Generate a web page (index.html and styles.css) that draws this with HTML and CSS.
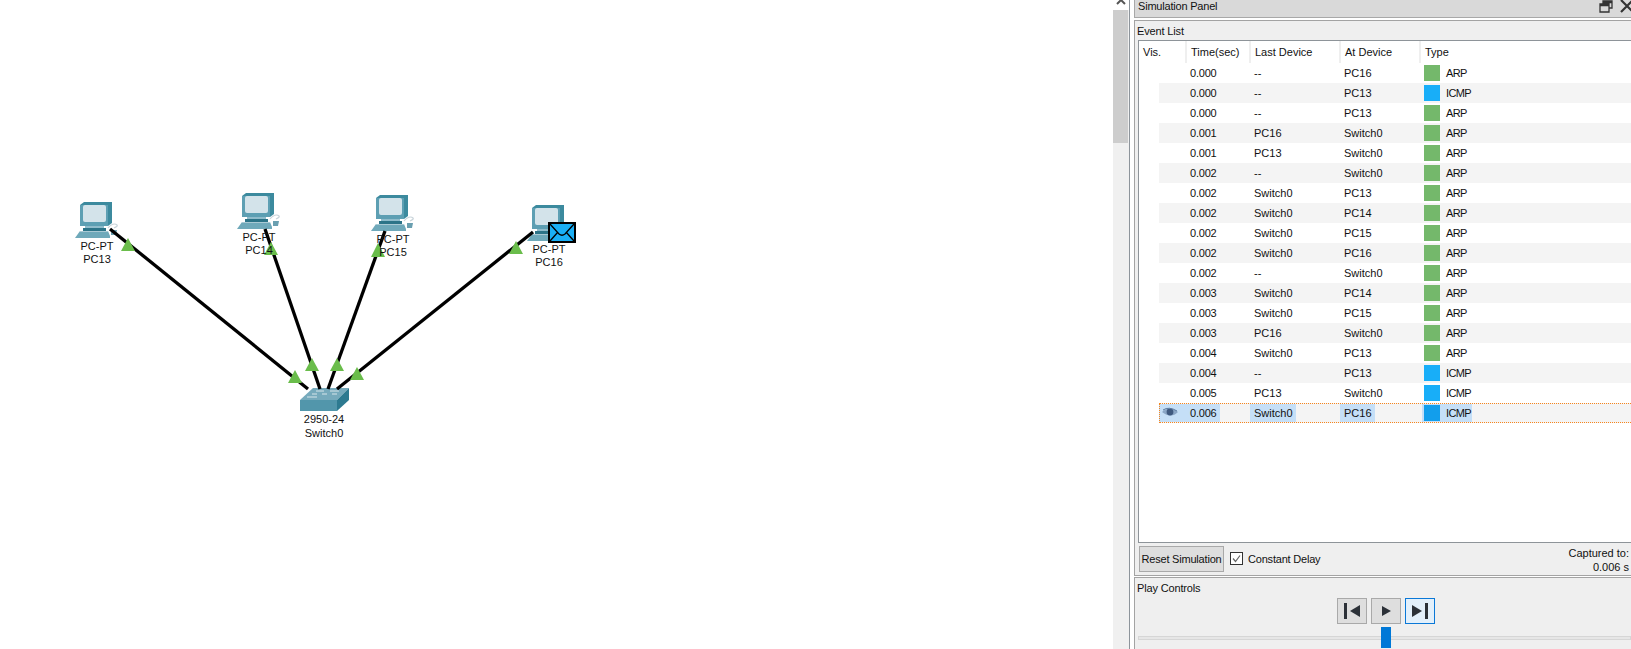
FILE: index.html
```html
<!DOCTYPE html>
<html lang="en">
<head>
<meta charset="utf-8">
<title>Simulation Panel</title>
<link rel="stylesheet" href="styles.css">
</head>
<body>
<svg class="defs" width="0" height="0" aria-hidden="true">
  <defs>
    <symbol id="pc" viewBox="0 0 44 36">
      <polygon points="5,3 9,0 37,0 37,21 33,24 5,24" fill="#3c8a9e"/>
      <rect x="5" y="3" width="28" height="21" fill="#5d9fb3"/>
      <rect x="8" y="3" width="23" height="17" rx="2" fill="#d3e3ea"/>
      <rect x="10" y="24" width="19" height="2" fill="#8fbccb"/>
      <rect x="8" y="26" width="23" height="3" fill="#2c7488"/>
      <polygon points="5,29 33,29 35,34 35,36 0,36" fill="#6fa9ba"/>
      <rect x="5" y="29" width="28" height="1" fill="#a9c9d4"/>
      <path d="M33 26c3-4 7-5 9-3 1 1-1 2-3 3" fill="none" stroke="#c9d4da" stroke-width="1.2"/>
      <polygon points="36,28 42,28 41,33 36,33" fill="#6a9fb0"/>
    </symbol>
  </defs>
</svg>
<main class="app">
  <section class="canvas">
    <div class="node node-13"><svg class="pc-icon"><use href="#pc"/></svg><p class="label">PC-PT</p><p class="label">PC13</p></div>
    <div class="node node-14"><svg class="pc-icon"><use href="#pc"/></svg><p class="label">PC-PT</p><p class="label">PC14</p></div>
    <div class="node node-15"><svg class="pc-icon"><use href="#pc"/></svg><p class="label">PC-PT</p><p class="label">PC15</p></div>
    <div class="node node-16"><svg class="pc-icon"><use href="#pc"/></svg><p class="label">PC-PT</p><p class="label">PC16</p></div>
    <div class="node node-sw">
      <svg class="sw-icon" viewBox="0 0 50 23">
        <polygon points="13,0 49,0 37,12 0,12" fill="#76aabc"/>
        <rect x="0" y="12" width="37" height="11" fill="#5296ab"/>
        <polygon points="37,12 49,0 49,12 37,23" fill="#2d7a90"/>
        <path d="M16 3h8M30 3h9M12 6h5M22 6h5M32 6h5M7 9h10" stroke="#d6e5ea" stroke-width="1"/>
      </svg>
      <p class="label">2950-24</p><p class="label">Switch0</p>
    </div>
    <svg class="links" viewBox="0 0 1113 649">
      <g stroke="#000" stroke-width="3.300" fill="none">
        <line x1="110" y1="229" x2="308" y2="389"/>
        <line x1="265" y1="229" x2="320" y2="389"/>
        <line x1="385" y1="231" x2="328" y2="389"/>
        <line x1="533" y1="232" x2="337" y2="389"/>
      </g>
      <g fill="#6abd4b">
        <polygon points="128,238 135,251 121,251"/>
        <polygon points="271,242 278,255 264,255"/>
        <polygon points="378,243 385,257 371,257"/>
        <polygon points="516,241 523,254 509,254"/>
        <polygon points="295,370 302,383 288,383"/>
        <polygon points="312,358 319,371 305,371"/>
        <polygon points="337,358 344,371 330,371"/>
        <polygon points="357,367 364,380 350,380"/>
      </g>
    </svg>
    <svg class="envelope" viewBox="0 0 28 21">
      <rect x="1" y="1" width="26" height="19" fill="#1aaff5" stroke="#000" stroke-width="2"/>
      <path d="M2 2l9 10q3 2.500 6 0l9-10M2 19l8-9M26 19l-8-9" fill="none" stroke="#000" stroke-width="1.300"/>
    </svg>
  </section>

  <div class="scrollbar">
    <div class="scroll-up"><svg width="10" height="6" viewBox="0 0 10 6"><path d="M1 5l4-4 4 4" fill="none" stroke="#555" stroke-width="2"/></svg></div>
    <div class="scroll-thumb"></div>
  </div>

  <aside class="panel">
    <header class="titlebar">
      <span>Simulation Panel</span>
      <span class="title-icons">
        <svg width="14" height="13" viewBox="0 0 14 13"><path d="M4 4V1h9v7h-3M1 4h9v8H1zM1 5.500h9M4 2.500h9" fill="none" stroke="#333" stroke-width="1.300"/></svg>
        <svg width="14" height="13" viewBox="0 0 14 13"><path d="M1 0l12 12M13 0L1 12" stroke="#333" stroke-width="2.200"/></svg>
      </span>
    </header>

    <section class="events">
      <h2 class="section-label">Event List</h2>
      <div class="table">
        <div class="row head">
          <div class="th vis-head">Vis.</div><div class="th">Time(sec)</div><div class="th">Last Device</div><div class="th">At Device</div><div class="th">Type</div>
        </div>
        <div class="row"><i></i><div class="vis"></div><div class="td time"><span>0.000</span></div><div class="td"><span>--</span></div><div class="td"><span>PC16</span></div><div class="type"><b class="arp"></b>ARP</div></div>
        <div class="row alt"><i></i><div class="vis"></div><div class="td time"><span>0.000</span></div><div class="td"><span>--</span></div><div class="td"><span>PC13</span></div><div class="type"><b class="icmp"></b>ICMP</div></div>
        <div class="row"><i></i><div class="vis"></div><div class="td time"><span>0.000</span></div><div class="td"><span>--</span></div><div class="td"><span>PC13</span></div><div class="type"><b class="arp"></b>ARP</div></div>
        <div class="row alt"><i></i><div class="vis"></div><div class="td time"><span>0.001</span></div><div class="td"><span>PC16</span></div><div class="td"><span>Switch0</span></div><div class="type"><b class="arp"></b>ARP</div></div>
        <div class="row"><i></i><div class="vis"></div><div class="td time"><span>0.001</span></div><div class="td"><span>PC13</span></div><div class="td"><span>Switch0</span></div><div class="type"><b class="arp"></b>ARP</div></div>
        <div class="row alt"><i></i><div class="vis"></div><div class="td time"><span>0.002</span></div><div class="td"><span>--</span></div><div class="td"><span>Switch0</span></div><div class="type"><b class="arp"></b>ARP</div></div>
        <div class="row"><i></i><div class="vis"></div><div class="td time"><span>0.002</span></div><div class="td"><span>Switch0</span></div><div class="td"><span>PC13</span></div><div class="type"><b class="arp"></b>ARP</div></div>
        <div class="row alt"><i></i><div class="vis"></div><div class="td time"><span>0.002</span></div><div class="td"><span>Switch0</span></div><div class="td"><span>PC14</span></div><div class="type"><b class="arp"></b>ARP</div></div>
        <div class="row"><i></i><div class="vis"></div><div class="td time"><span>0.002</span></div><div class="td"><span>Switch0</span></div><div class="td"><span>PC15</span></div><div class="type"><b class="arp"></b>ARP</div></div>
        <div class="row alt"><i></i><div class="vis"></div><div class="td time"><span>0.002</span></div><div class="td"><span>Switch0</span></div><div class="td"><span>PC16</span></div><div class="type"><b class="arp"></b>ARP</div></div>
        <div class="row"><i></i><div class="vis"></div><div class="td time"><span>0.002</span></div><div class="td"><span>--</span></div><div class="td"><span>Switch0</span></div><div class="type"><b class="arp"></b>ARP</div></div>
        <div class="row alt"><i></i><div class="vis"></div><div class="td time"><span>0.003</span></div><div class="td"><span>Switch0</span></div><div class="td"><span>PC14</span></div><div class="type"><b class="arp"></b>ARP</div></div>
        <div class="row"><i></i><div class="vis"></div><div class="td time"><span>0.003</span></div><div class="td"><span>Switch0</span></div><div class="td"><span>PC15</span></div><div class="type"><b class="arp"></b>ARP</div></div>
        <div class="row alt"><i></i><div class="vis"></div><div class="td time"><span>0.003</span></div><div class="td"><span>PC16</span></div><div class="td"><span>Switch0</span></div><div class="type"><b class="arp"></b>ARP</div></div>
        <div class="row"><i></i><div class="vis"></div><div class="td time"><span>0.004</span></div><div class="td"><span>Switch0</span></div><div class="td"><span>PC13</span></div><div class="type"><b class="arp"></b>ARP</div></div>
        <div class="row alt"><i></i><div class="vis"></div><div class="td time"><span>0.004</span></div><div class="td"><span>--</span></div><div class="td"><span>PC13</span></div><div class="type"><b class="icmp"></b>ICMP</div></div>
        <div class="row"><i></i><div class="vis"></div><div class="td time"><span>0.005</span></div><div class="td"><span>PC13</span></div><div class="td"><span>Switch0</span></div><div class="type"><b class="icmp"></b>ICMP</div></div>
        <div class="row alt selected"><i></i>
          <div class="vis">
            <svg width="16" height="11" viewBox="0 0 16 11"><path d="M0 5Q7-2 16 5Q9 12 0 5Z" fill="#8aa6c6"/><circle cx="8" cy="5" r="3.400" fill="#3f5a80"/><path d="M1 3Q7-1 15 4" fill="none" stroke="#5a7aa0" stroke-width="1"/></svg>
          </div>
          <div class="td time"><span>0.006</span></div><div class="td"><span>Switch0</span></div><div class="td"><span>PC16</span></div><div class="type"><b class="icmp"></b>ICMP</div>
        </div>
      </div>
      <footer class="event-foot">
        <button class="reset" type="button">Reset Simulation</button>
        <label class="check">
          <svg width="13" height="13" viewBox="0 0 13 13"><rect x=".5" y=".5" width="12" height="12" fill="#fff" stroke="#333"/><path d="M3 6.500l2.500 3L10 3.500" fill="none" stroke="#666" stroke-width="1.200"/></svg>
          Constant Delay
        </label>
        <div class="captured"><div>Captured to:</div><div>0.006 s</div></div>
      </footer>
    </section>

    <section class="play">
      <h2 class="section-label">Play Controls</h2>
      <div class="play-buttons">
        <button class="pbtn" type="button" aria-label="Back"><svg width="16" height="16" viewBox="0 0 16 16"><rect x="0" y="0" width="3" height="16" fill="#2c3138"/><polygon points="16,2 16,14 6,8" fill="#2c3138"/></svg></button>
        <button class="pbtn" type="button" aria-label="Play"><svg width="10" height="12" viewBox="0 0 10 12"><polygon points="1,1 10,6 1,11" fill="#2c3138"/></svg></button>
        <button class="pbtn active" type="button" aria-label="Forward"><svg width="16" height="16" viewBox="0 0 16 16"><polygon points="0,2 0,14 10,8" fill="#2c3138"/><rect x="13" y="0" width="3" height="16" fill="#2c3138"/></svg></button>
      </div>
      <div class="slider"><div class="slider-track"></div><div class="slider-thumb"></div></div>
    </section>
  </aside>
</main>
</body>
</html>
```

FILE: styles.css
```css
* { box-sizing: border-box; }
html, body { margin: 0; padding: 0; height: 100%; overflow: hidden; background: #fff; }
body { font: 11px/14px "Liberation Sans", Arial, sans-serif; color: #111; }
p, h2 { margin: 0; font: inherit; }
.defs { position: absolute; }

.app { display: flex; width: 1631px; height: 649px; overflow: hidden; }

.canvas { position: relative; flex: 0 0 1113px; height: 649px; background: #fff; }
.node { position: absolute; width: 44px; display: flex; flex-direction: column; align-items: center; }
.node-13 { left: 75px; top: 202px; }
.node-14 { left: 237px; top: 193px; }
.node-15 { left: 371px; top: 195px; }
.node-16 { left: 527px; top: 205px; }
.node-sw { left: 299px; top: 388px; width: 50px; }
.pc-icon { width: 44px; height: 36px; display: block; margin-bottom: 2px; }
.pc-icon ~ .label { line-height: 13px; }
.sw-icon { width: 50px; height: 23px; display: block; margin: 0 0 1px 1px; }
.label { position: relative; z-index: 2; white-space: nowrap; line-height: 14px; color: #111; }
.links { position: absolute; left: 0; top: 0; width: 1113px; height: 649px; z-index: 1; }
.envelope { position: absolute; left: 548px; top: 222px; width: 28px; height: 21px; z-index: 3; }

.scrollbar { flex: 0 0 17px; height: 649px; background: #f0f0f0; border-right: 1px solid #8d949b; margin-right: 4px; }
.scroll-up { height: 10px; background: #fff; display: flex; justify-content: center; overflow: hidden; }
.scroll-up svg { margin-top: -1px; }
.scroll-thumb { height: 133px; width: 15px; background: #cdcdcd; }

.panel { flex: 1 1 auto; min-width: 0; height: 649px; background: #fff; display: flex; flex-direction: column; gap: 1px; }
.titlebar { height: 18px; margin-bottom: 1px; background: #d9d9d9; border: 1px solid #a8a8a8; border-width: 0 0 1px 1px; padding-left: 3px; display: flex; justify-content: space-between; line-height: 12px; letter-spacing: -.2px; }
.title-icons { display: flex; gap: 7px; margin-right: -3px; height: 13px; }
.title-icons svg { flex: none; }

.events { height: 557px; background: #efefef; border: 1px solid #a3a3a3; border-right: 0; padding-left: 3px; display: flex; flex-direction: column; }
.section-label { height: 19px; line-height: 20px; margin-left: -1px; letter-spacing: -.15px; }
.table { height: 503px; background: #fff; border: 1px solid #8e9499; border-right: 0; }
.row { display: grid; grid-template-columns: 20px 27px 64px 90px 80px 1fr; height: 20px; align-items: center; }
.row.head { height: 22px; grid-template-columns: 47px 64px 90px 80px 1fr; }
.th { height: 22px; line-height: 22px; padding-left: 5px; border-right: 2px solid #efefef; margin-right: -1px; }
.th:last-child { border-right: 0; }
.vis-head { padding-left: 4px; }
.row.alt > *:not(i) { background: #f4f4f4; height: 20px; }
.td { display: flex; align-items: center; height: 20px; }
.td span { padding: 0 3px 0 4px; line-height: 18px; }
.time { letter-spacing: -.2px; }
.vis { height: 20px; display: flex; align-items: center; padding-left: 3px; }
.type { display: flex; align-items: center; height: 20px; padding-left: 4px; letter-spacing: -.6px; }
.type b { width: 16px; height: 16px; margin-right: 6px; flex: none; }
.arp { background: #74b86b; }
.icmp { background: #18aef8; }

.selected { position: relative; }
.selected::after { content: ""; position: absolute; left: 20px; right: -2px; top: 0; bottom: 0; border: 1px dotted #f7861e; pointer-events: none; }
.selected .td span { background: #c5dff7; }
.selected .vis { background: linear-gradient(#c5dff7, #c5dff7) 0 1px / 100% 18px no-repeat #f4f4f4 !important; }
.selected .type { background: linear-gradient(#c5dff7, #c5dff7) 2px 1px / 50px 18px no-repeat #f4f4f4 !important; }
.selected .type b { background: #129eec; }

.event-foot { flex: 1; display: flex; align-items: flex-start; padding: 3px 0 0 1px; }
.reset { width: 85px; height: 26px; padding: 0; background: #dedede; border: 1px solid #a9a9a9; font: inherit; color: #111; letter-spacing: -.2px; white-space: nowrap; }
.check { display: flex; align-items: center; gap: 5px; height: 26px; margin-left: 6px; letter-spacing: -.2px; }
.captured { margin-left: auto; margin-right: 2px; text-align: right; line-height: 14px; }

.play { flex: 1; background: #efefef; border: 1px solid #a3a3a3; border-width: 1px 0 0 1px; padding-left: 3px; }
.play .section-label { height: 20px; line-height: 21px; }
.play-buttons { display: flex; justify-content: center; gap: 4px; padding-left: 3px; }
.pbtn { width: 30px; height: 26px; padding: 0; background: #dedede; border: 1px solid #a9a9a9; display: flex; align-items: center; justify-content: center; }
.pbtn.active { background: #e3f0fb; border-color: #0a78d7; }
.slider { position: relative; height: 25px; }
.slider-track { position: absolute; left: 0; right: 0; top: 12px; height: 4px; background: #e6e6e6; border: 1px solid #d6d6d6; }
.slider-thumb { position: absolute; left: 243px; top: 3px; width: 10px; height: 21px; background: #0078d7; }
```
